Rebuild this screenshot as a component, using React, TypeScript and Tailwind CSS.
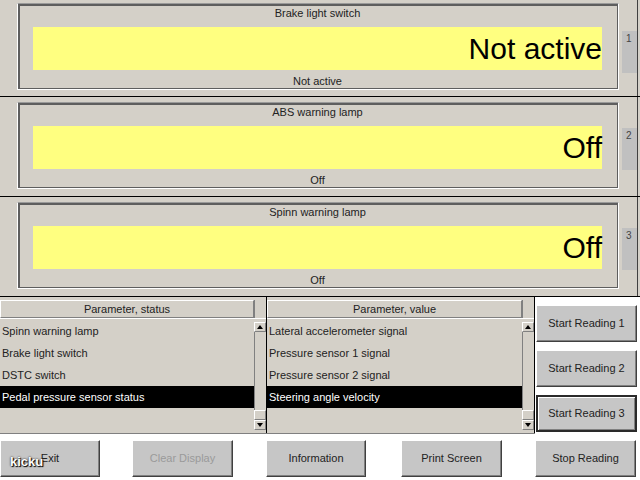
import React from 'react';

// Diagnostic readout screen: three value panels, two parameter lists, command buttons

type PanelProps = { title: string; value: string; tab: string; first?: boolean };

const ValuePanel: React.FC<PanelProps> = ({ title, value, tab, first }) => (
  <div className={`flex border-b border-black ${first ? 'h-[97px]' : 'h-[100px]'}`}>
    <div className="w-[17px]" />
    <div className={`flex-1 flex flex-col ${first ? 'pt-[3px] pb-[6px]' : 'pt-[5px] pb-[7px]'}`}>
      <div className="flex-1 border border-white border-t-[#9a9a9a]">
        <div className="h-full flex flex-col border-t-2 border-l-2 border-r border-b border-[#5e5e5e] pl-[13px] pr-[15px]">
          <div className="h-[14px] leading-[14px] text-center text-[11px] text-[#222]">{title}</div>
          <div className="mt-[7px] h-[43px] bg-[#ffff80] flex items-center justify-end">
            <span className="text-[30px] leading-none text-black">{value}</span>
          </div>
          <div className="mt-[4px] h-[14px] leading-[14px] text-center text-[11px] text-[#222]">{value}</div>
        </div>
      </div>
    </div>
    <div className="w-[19px] border-r border-[#404040] pt-[31px] pl-[3px]">
      <div className="h-[42px] w-[15px] bg-[#c0c0c0] pl-[4px] pt-[2px] text-[10px] leading-[12px] text-[#444]">{tab}</div>
    </div>
    <div className="w-[2px]" />
  </div>
);

type ListProps = { title: string; items: string[]; selected: number; className?: string };

const ListBox: React.FC<ListProps> = ({ title, items, selected, className }) => (
  <div className={`flex flex-col pt-[3px] ${className ?? ''}`}>
    <div className="flex h-[18px]">
      <div className="flex-1 border border-t-white border-l-white border-b-[#808080] border-r-[#808080] text-center text-[11px] leading-[16px] text-[#222]">
        {title}
      </div>
      <div className="w-[12px] border-l border-[#808080]" />
    </div>
    <div className="flex-1 flex border-t border-white">
      <div className="flex-1 flex flex-col pt-[1px]">
        {[...items, ''].map((it, i) => (
          <div
            key={i}
            className={`h-[22px] leading-[22px] pl-[2px] text-[11px] whitespace-nowrap ${
              i === selected ? 'bg-black text-white' : 'text-[#222]'
            }`}
          >
            {it}
          </div>
        ))}
      </div>
      <div className="w-[12px] flex flex-col pt-[3px] pb-[3px]">
        <div className="h-[10px] border border-t-white border-l-white border-b-[#808080] border-r-[#808080] flex items-center justify-center">
          <svg width="6" height="4" viewBox="0 0 6 4"><path d="M3 0 L6 4 L0 4 Z" fill="#000" /></svg>
        </div>
        <div className="flex-1 border-l border-[#808080]" />
        <div className="h-[10px] border border-t-white border-l-white border-b-[#808080] border-r-[#808080]" />
        <div className="h-[10px] border border-t-white border-l-white border-b-[#808080] border-r-[#808080] flex items-center justify-center">
          <svg width="6" height="4" viewBox="0 0 6 4"><path d="M0 0 L6 0 L3 4 Z" fill="#000" /></svg>
        </div>
      </div>
    </div>
  </div>
);

const Button: React.FC<{ label: string; disabled?: boolean; focused?: boolean; className?: string }> = ({
  label,
  disabled,
  focused,
  className,
}) => (
  <div
    className={`h-[37px] flex items-center justify-center bg-[#c6c6c6] text-[11px] ${
      focused
        ? 'border-2 border-[#2a2a2a] shadow-[inset_1px_1px_0_#ffffff,inset_-1px_-1px_0_#808080]'
        : 'border border-t-white border-l-white border-b-[#404040] border-r-[#404040] shadow-[inset_-1px_-1px_0_#808080]'
    } ${disabled ? 'text-[#9a9a9a]' : 'text-[#222]'} ${className ?? ''}`}
  >
    {label}
  </div>
);

const App: React.FC = () => {
  return (
    <div className="relative w-[640px] h-[480px] overflow-hidden bg-[#d4d0c8] flex flex-col font-['Liberation_Sans',Arial,sans-serif]">
      <ValuePanel title="Brake light switch" value="Not active" tab="1" first />
      <ValuePanel title="ABS warning lamp" value="Off" tab="2" />
      <ValuePanel title="Spinn warning lamp" value="Off" tab="3" />

      <div className="flex-1 bg-white flex flex-col">
        <div className="flex h-[137px]">
          <div className="w-[535px] bg-[#d4d0c8] flex border-b border-[#808080]">
            <ListBox
              className="w-[266px]"
              title="Parameter, status"
              items={['Spinn warning lamp', 'Brake light switch', 'DSTC switch', 'Pedal pressure sensor status']}
              selected={3}
            />
            <div className="w-px bg-black" />
            <ListBox
              className="flex-1"
              title="Parameter, value"
              items={['Lateral accelerometer signal', 'Pressure sensor 1 signal', 'Pressure sensor 2 signal', 'Steering angle velocity']}
              selected={3}
            />
            <div className="w-px bg-black" />
          </div>
          <div className="flex-1 flex flex-col pt-[8px] pl-[1px] pr-[3px] gap-[8px]">
            <Button label="Start Reading 1" />
            <Button label="Start Reading 2" />
            <Button label="Start Reading 3" focused />
          </div>
        </div>

        <div className="mt-[6px] flex">
          <Button label="Exit" className="w-[100px]" />
          <Button label="Clear Display" disabled className="w-[101px] ml-[32px]" />
          <Button label="Information" className="w-[100px] ml-[33px]" />
          <Button label="Print Screen" className="w-[101px] ml-[35px]" />
          <Button label="Stop Reading" className="w-[101px] ml-[33px]" />
        </div>
      </div>

      {/* watermark over the Exit button */}
      <span className="absolute left-[10px] top-[452px] text-[13px] font-bold text-white [text-shadow:0_0_2px_#000,1px_1px_1px_#000]">
        kicku
      </span>
    </div>
  );
};

export default App;
